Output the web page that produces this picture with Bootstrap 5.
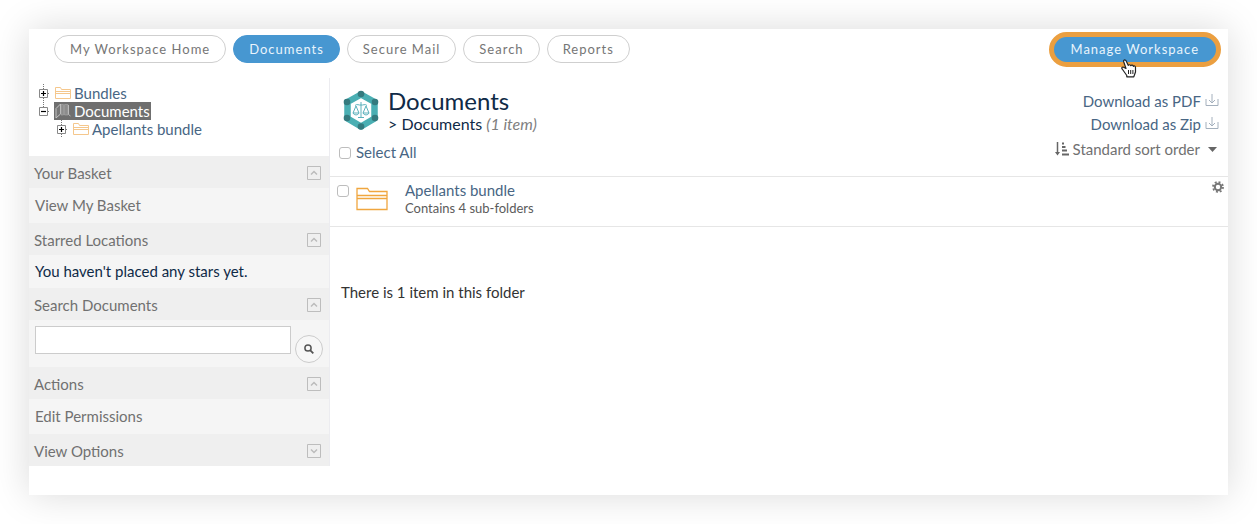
<!DOCTYPE html>
<html lang="en">
<head>
<meta charset="utf-8">
<meta name="viewport" content="width=device-width, initial-scale=1">
<title>Documents</title>
<link href="https://cdn.jsdelivr.net/npm/bootstrap@5.3.0/dist/css/bootstrap.min.css" rel="stylesheet">
<style>
:root { --ink: #0f2a47; --link: #486684; --muted-ink: #717171; --rule: #e6e6e6; }
body { font-family: Lato, "Liberation Sans", sans-serif; font-size: 15px; line-height: 18px; color: var(--ink); background: #fff; }
a { color: var(--link); text-decoration: none; }
button { font: inherit; }
svg { display: block; flex: none; }
.page { padding: 29px; }
.panel { background: #fff; min-height: calc(100vh - 58px); box-shadow: 0 0 36px rgba(0,0,0,.15); }
.topbar { padding: 6px 7px 0 25px; height: 49px; }
.tabs { gap: 7px; }
.pill { height: 28px; padding: 0 15px; border: 1px solid #cfcfcf; border-radius: 18px; background: #fff; color: #767676; font-size: 13px; line-height: 26px; letter-spacing: 1px; white-space: nowrap; }
.pill.active { background: #4797d1; border-color: #4797d1; color: #e9f4fc; }
.pill.manage { height: 35px; padding: 0 17px; border: 5px solid #eb9f40; line-height: 25px; background: #4797d1; color: #e9f4fc; }
.manage-wrap { margin-top: -3px; height: 35px; }
.pointer { left: 71px; top: 27px; pointer-events: none; }
.sidebar { width: 301px; border-right: 1px solid #ececf0; }
.tree { padding: 6px 0 0 9px; height: 78px; }
.tree ul { padding-left: 18px; }
.tree-row { height: 18px; }
.tree-row button { padding: 0; border: 0; background: none; width: 16px; height: 18px; }
.tree-row a { padding: 0 1px; gap: 3px; height: 18px; }
.tree-row a.current { background: #6f6f6f; color: #fff; }
.sec-head { height: 32px; padding: 2px 8px 0 5px; background: #efefef; color: var(--muted-ink); font-size: 15px; line-height: 18px; font-weight: 400; }
.sec-head button { padding: 0; border: 0; background: none; }
.sec-body { min-height: 35px; padding: 0 6px 2px; background: #f5f5f5; }
.sec-body a { color: var(--muted-ink); }
.sec-note { min-height: 33px; }
.sec-search { min-height: 47px; padding: 6px 6px 4px; gap: 4px; }
.sec-search input { height: 28px; border: 1px solid #ccc; background: #fff; min-width: 0; padding: 0 6px; }
.round { width: 28px; height: 28px; margin-top: 9px; padding: 0; border: 1px solid #ccc; border-radius: 50%; background: #f7f7f7; }
.main-head { padding: 8px 9px 0 13px; height: 65px; }
.main-head h1 { font-size: 24px; line-height: 29px; font-weight: 400; }
.crumb { font-size: 16px; }
.crumb em { color: #808080; }
.tick { appearance: none; width: 12px; height: 12px; border: 1px solid #bdbdbd; border-radius: 3px; background: #fff; margin: 0; flex: none; }
.tick:checked { background: #4797d1; }
.downloads { row-gap: 5px; padding-top: 6px; }
.sort { border: 0; background: none; padding: 0; color: var(--muted-ink); margin-top: 2px; }
.select-all { padding: 0 9px; height: 33px; gap: 5px; }
.item { border-top: 1px solid var(--rule); border-bottom: 1px solid var(--rule); height: 51px; padding: 4px 4px 0 7px; }
.item-icon { margin: 4px 17px 0 7px; }
.item small { font-size: 13px; color: #5b5b5b; }
.summary { padding: 56px 11px; color: #333; }
</style>
</head>
<body>
<svg width="0" height="0" class="position-absolute" aria-hidden="true">
  <symbol id="folder" viewBox="0 0 32 24"><path d="M1 22.500V1.500H11.500L13.500 4.500H31V22.500ZM1 8.500H31M1 11.500H31" fill="none" stroke="#f0a63f" stroke-width="1.300"/></symbol>
  <symbol id="folder-sm" viewBox="0 0 16 14"><path d="M.5 12.500V1.500H5.500L6.500 3.500H15.500V12.500ZM.5 5.500H15.500M.5 7.500H15.500" fill="none" stroke="#f5c78c"/></symbol>
  <symbol id="up" viewBox="0 0 14 14"><path d="M.5.5h13v13H.5z" fill="none" stroke="#bdbdbd"/><path d="M4 8.500 7 5.500 10 8.500" fill="none" stroke="#bbb" stroke-width="1.500"/></symbol>
  <symbol id="down" viewBox="0 0 14 14"><path d="M.5.5h13v13H.5z" fill="none" stroke="#bdbdbd"/><path d="M4 5.500 7 8.500 10 5.500" fill="none" stroke="#bbb" stroke-width="1.500"/></symbol>
  <symbol id="plus" viewBox="0 0 12 18"><path d="M5.500 0V5M5.500 14V18M10 9.500H12" stroke="#777" stroke-dasharray="1 1"/><path d="M1.500 5.500h8v8h-8z" fill="#fff" stroke="#888"/><path d="M3 9.500H8M5.500 7V12" stroke="#000" stroke-width="1.200"/></symbol>
  <symbol id="minus" viewBox="0 0 12 18"><path d="M5.500 0V5M10 9.500H12" stroke="#777" stroke-dasharray="1 1"/><path d="M1.500 5.500h8v8h-8z" fill="#fff" stroke="#888"/><path d="M3 9.500H8" stroke="#000" stroke-width="1.200"/></symbol>
  <symbol id="download" viewBox="0 0 14 14"><path d="M1 5V11.500H13V5" fill="none" stroke="#a4b0bd"/><path d="M7 0V8.500M4 6 7 9 10 6" fill="none" stroke="#a4b0bd"/></symbol>
</svg>
<div class="page">
<div class="panel d-flex flex-column">
  <header class="topbar d-flex justify-content-between align-items-start">
    <nav class="tabs d-flex" aria-label="Workspace">
      <button type="button" class="pill">My Workspace Home</button>
      <button type="button" class="pill active">Documents</button>
      <button type="button" class="pill">Secure Mail</button>
      <button type="button" class="pill">Search</button>
      <button type="button" class="pill">Reports</button>
    </nav>
    <div class="manage-wrap position-relative">
      <button type="button" class="pill manage">Manage Workspace</button>
      <svg class="pointer position-absolute" width="17" height="19" viewBox="0 0 17 19" aria-hidden="true"><path d="M5.500 1.200C4.300.5 3.300 1.400 3.700 2.700L6 9.500 3.700 8.200C2.300 7.600 1.200 8.800 2.200 10L6.800 16.500V17.800H13.800L15.500 13V8.500C15.400 7 14 6.600 13.400 7.300 13 6 11.400 5.700 10.800 6.700 10.300 5.500 8.800 5.500 8.200 6.300L6.300 2.200Z" fill="#fff" stroke="#222" stroke-width="1.200" stroke-linejoin="round"/><path d="M8.500 11V15M10.700 11V15M12.900 11V15" stroke="#222"/></svg>
    </div>
  </header>
  <div class="d-flex align-items-start">
    <aside class="sidebar flex-shrink-0">
      <ul class="tree list-unstyled mb-0">
        <li><div class="tree-row d-flex align-items-center"><button type="button" aria-label="Expand Bundles"><svg width="12" height="18"><use href="#plus"/></svg></button><a href="#" class="d-flex align-items-center"><svg width="16" height="14"><use href="#folder-sm"/></svg>Bundles</a></div></li>
        <li><div class="tree-row d-flex align-items-center"><button type="button" aria-label="Collapse Documents"><svg width="12" height="18"><use href="#minus"/></svg></button><a href="#" class="current d-flex align-items-center"><svg width="16" height="16" viewBox="0 0 16 16"><path d="M1 5.500 5.500 1V11L1 15Z" fill="#777" stroke="#c5c5c5"/><path d="M6 1.500H8.500V12H6ZM9.500 1.500H13V12H9.500Z" fill="#8c8c8c" stroke="#aaa" stroke-width=".6"/><path d="M13.500 2V11.500L15.500 13" fill="none" stroke="#bbb"/></svg>Documents</a></div>
          <ul class="list-unstyled">
            <li><div class="tree-row d-flex align-items-center"><button type="button" aria-label="Expand Apellants bundle"><svg width="12" height="18"><use href="#plus"/></svg></button><a href="#" class="d-flex align-items-center"><svg width="16" height="14"><use href="#folder-sm"/></svg>Apellants bundle</a></div></li>
          </ul>
        </li>
      </ul>
      <section>
        <h2 class="sec-head d-flex justify-content-between align-items-center mb-0">Your Basket<button type="button" aria-label="Collapse"><svg width="14" height="14"><use href="#up"/></svg></button></h2>
        <div class="sec-body d-flex align-items-center"><a href="#">View My Basket</a></div>
      </section>
      <section>
        <h2 class="sec-head d-flex justify-content-between align-items-center mb-0">Starred Locations<button type="button" aria-label="Collapse"><svg width="14" height="14"><use href="#up"/></svg></button></h2>
        <div class="sec-body sec-note d-flex align-items-center">You haven't placed any stars yet.</div>
      </section>
      <section>
        <h2 class="sec-head d-flex justify-content-between align-items-center mb-0"><label for="query">Search Documents</label><button type="button" aria-label="Collapse"><svg width="14" height="14"><use href="#up"/></svg></button></h2>
        <form class="sec-body sec-search d-flex align-items-start">
          <input type="text" id="query" class="flex-grow-1">
          <button type="button" class="round d-flex align-items-center justify-content-center flex-shrink-0" aria-label="Search"><svg width="10" height="10" viewBox="0 0 10 10"><circle cx="4" cy="4" r="3.100" fill="none" stroke="#555" stroke-width="1.500"/><path d="M6.300 6.300 9.300 9.300" stroke="#555" stroke-width="1.800"/></svg></button>
        </form>
      </section>
      <section>
        <h2 class="sec-head d-flex justify-content-between align-items-center mb-0">Actions<button type="button" aria-label="Collapse"><svg width="14" height="14"><use href="#up"/></svg></button></h2>
        <div class="sec-body d-flex align-items-center"><a href="#">Edit Permissions</a></div>
      </section>
      <section>
        <h2 class="sec-head d-flex justify-content-between align-items-center mb-0">View Options<button type="button" aria-label="Expand"><svg width="14" height="14"><use href="#down"/></svg></button></h2>
      </section>
    </aside>
    <main class="flex-grow-1">
      <div class="main-head d-flex justify-content-between align-items-start">
        <div class="d-flex">
          <svg class="mt-1 me-2" width="37" height="42" viewBox="0 0 37 42" aria-hidden="true"><path d="M18 4.500 31.500 12V28.500L18 36.500 4.500 28.500V12Z" fill="#fff" stroke="#4aafb3" stroke-width="6.500" stroke-linejoin="round"/><g fill="#347a7e"><circle cx="18" cy="4" r="3.300"/><circle cx="32" cy="12" r="3.300"/><circle cx="32" cy="28" r="3.300"/><circle cx="18" cy="36.500" r="3.300"/><circle cx="4" cy="28" r="3.300"/><circle cx="4" cy="12" r="3.300"/></g><g fill="none" stroke="#4aa9b4" stroke-width=".9"><path d="M18 12V27M15 27.500H21M12 15.500C14 13.500 16 15.500 18 15 20 15.500 22 13.500 24 15.500M13 16 10 23H16ZM23 16 20 23H26ZM10 23C11 25.500 15 25.500 16 23M20 23C21 25.500 25 25.500 26 23"/></g></svg>
          <div>
            <h1 class="mb-0">Documents</h1>
            <div class="crumb">&gt; Documents <em>(1 item)</em></div>
          </div>
        </div>
        <div class="downloads d-flex flex-column align-items-end">
          <a href="#" class="d-flex align-items-center gap-1">Download as PDF <svg width="14" height="14"><use href="#download"/></svg></a>
          <a href="#" class="d-flex align-items-center gap-1">Download as Zip <svg width="14" height="14"><use href="#download"/></svg></a>
          <button type="button" class="sort d-flex align-items-center"><svg class="me-1" width="14" height="14" viewBox="0 0 14 14"><path d="M2.500 0V11" stroke="#666" stroke-width="1.500"/><path d="M0 10H5L2.500 13.500Z" fill="#666"/><path d="M7 1.500H9M7 5H10.500M7 8.500H12M7 12.500H14" stroke="#666" stroke-width="1.800"/></svg>Standard sort order<svg class="ms-2" width="11" height="5" viewBox="0 0 11 5"><path d="M0 0H9L4.500 5Z" fill="#666"/></svg></button>
        </div>
      </div>
      <div class="select-all d-flex align-items-start"><input class="tick mt-1" type="checkbox" id="all"><label for="all" class="text-nowrap"><a href="#">Select All</a></label></div>
      <div class="item d-flex align-items-start">
        <input class="tick mt-1" type="checkbox" aria-label="Select Apellants bundle">
        <svg class="item-icon" width="32" height="28" viewBox="0 -2 32 28"><use href="#folder" width="32" height="24"/></svg>
        <div class="flex-grow-1 d-flex flex-column"><a href="#">Apellants bundle</a><small>Contains 4 sub-folders</small></div>
        <button type="button" class="border-0 bg-transparent p-0" aria-label="Settings"><svg width="12" height="12" viewBox="0 0 12 12"><circle cx="6" cy="6" r="3.200" fill="none" stroke="#777" stroke-width="2"/><circle cx="6" cy="6" r="5" fill="none" stroke="#777" stroke-width="1.800" stroke-dasharray="1.960 1.960"/></svg></button>
      </div>
      <p class="summary mb-0">There is 1 item in this folder</p>
    </main>
  </div>
</div>
</div>
</body>
</html>
